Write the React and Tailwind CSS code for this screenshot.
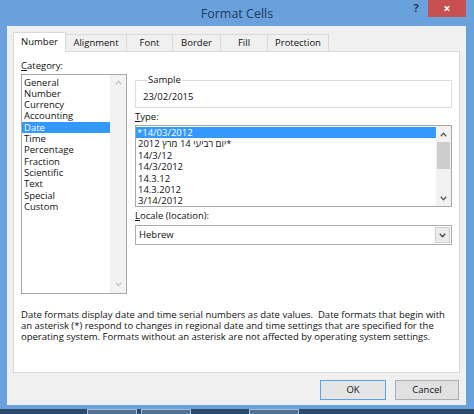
import React from "react";

const Up = ({ c }) => (
  <svg width="7" height="5" viewBox="0 0 7 5">
    <path d="M0.8 4.2 L3.5 1.2 L6.2 4.2" fill="none" stroke={c} strokeWidth="1.3" />
  </svg>
);
const Down = ({ c }) => (
  <svg width="7" height="5" viewBox="0 0 7 5">
    <path d="M0.8 0.8 L3.5 3.8 L6.2 0.8" fill="none" stroke={c} strokeWidth="1.3" />
  </svg>
);

const cats = ["General", "Number", "Currency", "Accounting", "Date", "Time", "Percentage", "Fraction", "Scientific", "Text", "Special", "Custom"];

export default function App() {
  return (
    <div className="w-[474px] h-[414px] bg-[#69a1dd] flex flex-col overflow-hidden font-['Open_Sans','DejaVu_Sans',sans-serif] text-[9.5px] text-[#111]">
      {/* title bar */}
      <div className="h-[26px] grid grid-cols-[1fr_auto_1fr] shrink-0">
        <div />
        <div className="text-[12.5px] leading-[26px] text-[#1f3a5c] pt-px">Format Cells</div>
        <div className="flex justify-end items-start pr-[8px]">
          <div className="w-[24px] h-[17px] flex items-center justify-center text-[11px] font-bold text-[#1f3a5c]">?</div>
          <div className="w-[38px] h-[17px] bg-[#c75050] flex items-center justify-center text-white text-[12px] font-bold leading-none">×</div>
        </div>
      </div>

      {/* body */}
      <div className="ml-[7px] mr-[8px] h-[379px] bg-[#f0f0f0] flex flex-col pt-[6px] px-[6px] shrink-0">
        {/* tabs */}
        <div className="flex items-end h-[20px] -mb-px relative z-10">
          <div className="w-[53px] h-[20px] bg-white border border-b-0 border-[#d9d9d9] flex items-center justify-center pb-[1px]">Number</div>
          <div className="w-[62px] h-[18px] -ml-px border border-[#d9d9d9] flex items-center justify-center">Alignment</div>
          <div className="w-[47px] h-[18px] -ml-px border border-[#d9d9d9] flex items-center justify-center">Font</div>
          <div className="w-[49px] h-[18px] -ml-px border border-[#d9d9d9] flex items-center justify-center">Border</div>
          <div className="w-[48px] h-[18px] -ml-px border border-[#d9d9d9] flex items-center justify-center">Fill</div>
          <div className="w-[62px] h-[18px] -ml-px border border-[#d9d9d9] flex items-center justify-center">Protection</div>
        </div>

        {/* panel */}
        <div className="h-[322px] bg-white border border-[#d9d9d9] pt-[8px] pl-[7px] pr-[6px] flex flex-col">
          <div className="flex gap-[8px]">
            {/* category */}
            <div className="w-[106px] flex flex-col">
              <div className="leading-[12px] mb-[2px]"><span className="underline">C</span>ategory:</div>
              <div className="flex h-[220px] border border-[#a8a8a8] bg-white">
                <div className="flex-1 pt-[1.5px]">
                  {cats.map((c) => (
                    <div
                      key={c}
                      className={c === "Date" ? "h-[11.33px] leading-[11.33px] pl-[2px] bg-[#3399ff] text-white" : "h-[11.33px] leading-[11.33px] pl-[2px]"}
                    >
                      {c}
                    </div>
                  ))}
                </div>
                <div className="w-[16px] bg-[#f2f2f2] flex flex-col items-center justify-between pt-[5px] pb-[6px]">
                  <Up c="#c4c4c4" />
                  <Down c="#c4c4c4" />
                </div>
              </div>
            </div>

            {/* right column */}
            <div className="w-[317px] flex flex-col mt-[14px]">
              <fieldset className="border border-[#dcdcdc] pl-[7px] pt-[5px] pb-[4px]">
                <legend className="ml-[4px] px-[1px] leading-[12px]">Sample</legend>
                <div className="leading-[12px]">23/02/2015</div>
              </fieldset>

              <div className="leading-[12px] mt-[3px] mb-[2px]"><span className="underline">T</span>ype:</div>
              <div className="flex h-[82px] border border-[#a8a8a8] bg-white">
                <div className="flex-1 pt-[1px]">
                  <div className="h-[11.4px] leading-[11.4px] pl-[1px] bg-[#3399ff] text-white">*14/03/2012</div>
                  <div className="h-[11.4px] leading-[11.4px] pl-[2px]">
                    <span dir="rtl" className="inline-block">*יום רביעי 14 מרץ 2012</span>
                  </div>
                  <div className="h-[11.4px] leading-[11.4px] pl-[2px]">14/3/12</div>
                  <div className="h-[11.4px] leading-[11.4px] pl-[2px]">14/3/2012</div>
                  <div className="h-[11.4px] leading-[11.4px] pl-[2px]">14.3.12</div>
                  <div className="h-[11.4px] leading-[11.4px] pl-[2px]">14.3.2012</div>
                  <div className="h-[11.4px] leading-[11.4px] pl-[2px]">3/14/2012</div>
                </div>
                <div className="w-[15px] bg-[#f2f2f2] flex flex-col">
                  <div className="h-[16px] flex items-center justify-center"><Up c="#5a5a5a" /></div>
                  <div className="h-[27px] mx-[1px] bg-[#cdcdcd]" />
                  <div className="flex-1" />
                  <div className="h-[16px] flex items-center justify-center"><Down c="#5a5a5a" /></div>
                </div>
              </div>

              <div className="leading-[12px] mt-[3px] mb-[3px]"><span className="underline">L</span>ocale (location):</div>
              <div className="flex h-[20px] border border-[#acacac] bg-white">
                <div className="flex-1 pl-[3px] leading-[18px]">Hebrew</div>
                <div className="w-[15px] m-px border border-[#d0d0d0] bg-[#ececec] flex items-center justify-center"><Down c="#444" /></div>
              </div>
            </div>
          </div>

          <div className="mt-[15px] leading-[11px] whitespace-nowrap">
            <div>Date formats display date and time serial numbers as date values.&nbsp; Date formats that begin with</div>
            <div>an asterisk (*) respond to changes in regional date and time settings that are specified for the</div>
            <div>operating system. Formats without an asterisk are not affected by operating system settings.</div>
          </div>
        </div>

        {/* buttons */}
        <div className="flex justify-end gap-[9px] mt-[7px] pr-px">
          <div className="w-[66px] h-[20px] border border-[#5ea2e6] bg-[#e5e5e5] flex items-center justify-center">OK</div>
          <div className="w-[64px] h-[20px] border border-[#adadad] bg-[#e1e1e1] flex items-center justify-center">Cancel</div>
        </div>
      </div>

      {/* taskbar strip */}
      <div className="h-[4px] shrink-0" />
      <div className="flex-1 bg-[#2c4a6a] flex">
        <div className="ml-[87px] w-[50px] border-x border-t border-[#a7bcd2] bg-[#56718f]" />
        <div className="ml-[4px] w-[50px] border-x border-t border-[#a7bcd2] bg-[#56718f]" />
        <div className="ml-[58px] w-[50px] border-x border-t border-[#a7bcd2] bg-[#56718f]" />
      </div>
    </div>
  );
}
